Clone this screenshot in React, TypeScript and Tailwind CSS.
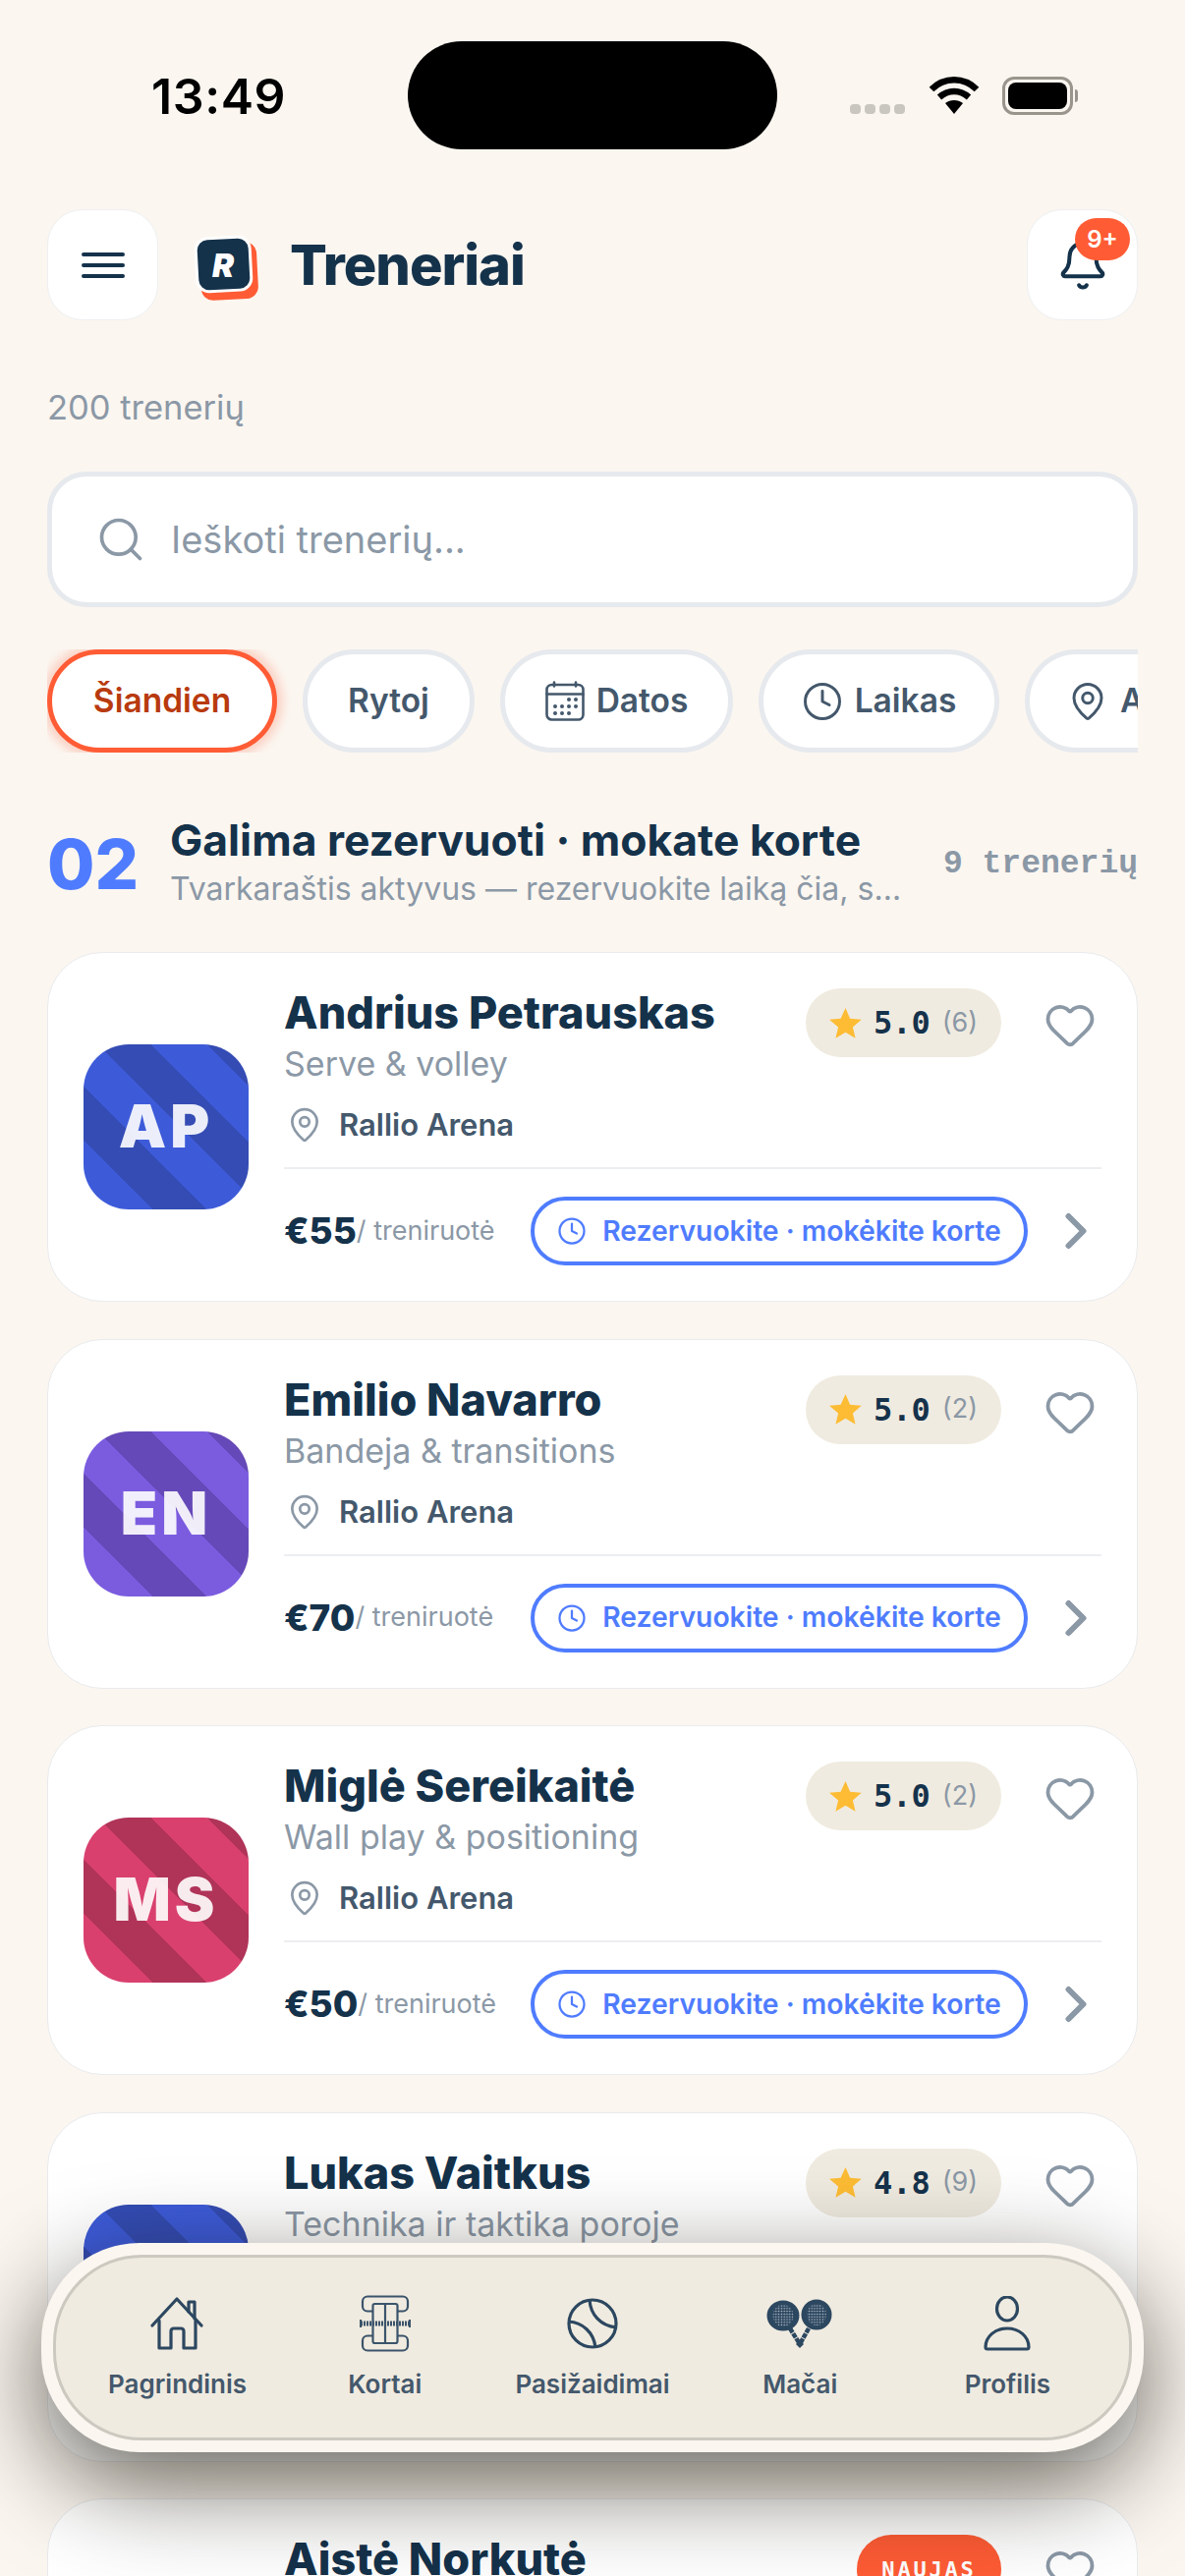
import { Bell, ChevronRight, Clock, Heart, MapPin, Search } from "lucide-react";

const body = "font-['Inter','Noto_Sans',sans-serif]";

const coaches = [
  {
    name: "Andrius Petrauskas",
    focus: "Serve & volley",
    price: "55",
    rating: "5.0",
    reviews: "(6)",
    initials: "AP",
    avatar: "bg-[repeating-linear-gradient(45deg,#344cb4_0,#344cb4_9.9px,#3d5bd9_9.9px,#3d5bd9_50.2px,#344cb4_50.2px,#344cb4_78.5px)]",
  },
  {
    name: "Emilio Navarro",
    focus: "Bandeja & transitions",
    price: "70",
    rating: "5.0",
    reviews: "(2)",
    initials: "EN",
    avatar: "bg-[repeating-linear-gradient(45deg,#6649b8_0,#6649b8_9.9px,#7b5cdf_9.9px,#7b5cdf_50.2px,#6649b8_50.2px,#6649b8_78.5px)]",
  },
  {
    name: "Miglė Sereikaitė",
    focus: "Wall play & positioning",
    price: "50",
    rating: "5.0",
    reviews: "(2)",
    initials: "MS",
    avatar: "bg-[repeating-linear-gradient(45deg,#b03358_0,#b03358_9.9px,#d9406e_9.9px,#d9406e_50.2px,#b03358_50.2px,#b03358_78.5px)]",
  },
  {
    name: "Lukas Vaitkus",
    focus: "Technika ir taktika poroje",
    price: "60",
    rating: "4.8",
    reviews: "(9)",
    initials: "LV",
    avatar: "bg-[repeating-linear-gradient(45deg,#344cb4_0,#344cb4_9.9px,#3d5bd9_9.9px,#3d5bd9_50.2px,#344cb4_50.2px,#344cb4_78.5px)]",
  },
  {
    name: "Aistė Norkutė",
    focus: "Pradedantiesiems",
    price: "45",
    rating: "",
    reviews: "",
    initials: "AN",
    avatar: "bg-[repeating-linear-gradient(45deg,#6649b8_0,#6649b8_9.9px,#7b5cdf_9.9px,#7b5cdf_50.2px,#6649b8_50.2px,#6649b8_78.5px)]",
  },
];

const Logo = () => (
  <svg width="68" height="68" viewBox="0 0 68 68" className="shrink-0">
    <rect x="7" y="8" width="58" height="58" rx="12" fill="#ff5c35" transform="rotate(-3 36 37)" />
    <rect x="3" y="3" width="55" height="54" rx="12" fill="#15324b" stroke="#fff" strokeWidth="3" transform="rotate(-3 30 30)" />
    <text x="30" y="43" textAnchor="middle" fontSize="33" fontWeight="900" fontStyle="italic" fill="#fff" fontFamily="Inter">R</text>
  </svg>
);

const MenuIcon = () => (
  <svg width="44" height="26" viewBox="0 0 44 26" stroke="#15324b" strokeWidth="4" strokeLinecap="round">
    <path d="M2 2h40M2 13h40M2 24h40" />
  </svg>
);

const CalendarIcon = () => (
  <svg width="40" height="41" viewBox="0 0 40 41" fill="none" stroke="#44586c" strokeWidth="2.6" strokeLinecap="round">
    <rect x="1.5" y="4" width="37" height="35.5" rx="5" />
    <path d="M1.5 13.5h37M9 1.5v4M31 1.5v4" />
    <g fill="#44586c" stroke="none">
      <circle cx="24" cy="19" r="2" />
      <circle cx="31" cy="19" r="2" />
      <circle cx="10" cy="26" r="2" />
      <circle cx="17" cy="26" r="2" />
      <circle cx="24" cy="26" r="2" />
      <circle cx="31" cy="26" r="2" />
      <circle cx="10" cy="33" r="2" />
      <circle cx="17" cy="33" r="2" />
      <circle cx="24" cy="33" r="2" />
    </g>
  </svg>
);

const StarIcon = () => (
  <svg width="33" height="31" viewBox="0 0 33 31" className="shrink-0">
    <path d="M16.5 0l4.6 10.8 11.6 1-8.8 7.6 2.7 11.4-10.1-6.1-10.1 6.1 2.7-11.4L0 11.8l11.6-1z" fill="#fdbc34" />
  </svg>
);

const HomeIcon = () => (
  <svg width="56" height="56" viewBox="0 0 56 56" fill="none" stroke="#2c4760" strokeWidth="3.2" strokeLinecap="round" strokeLinejoin="round">
    <path d="M2 30 27 3l25 27" />
    <path d="M39 16V6h6v17" />
    <path d="M9 25v28h12V36q0-3 3-3h7q3 0 3 3v17h12V25" />
  </svg>
);

const CourtIcon = () => (
  <svg width="52" height="58" viewBox="0 0 52 58" fill="none" stroke="#3b546b" strokeWidth="2.2" strokeLinejoin="round">
    <rect x="3" y="1.5" width="46" height="15" rx="5" />
    <rect x="3" y="41.5" width="46" height="15" rx="5" />
    <rect x="13.5" y="9" width="25" height="40" rx="2" fill="#f0ebe0" />
    <path d="M26 9v40" />
    <path d="M1 29h50" strokeWidth="5" strokeDasharray="2 1" />
    <path d="M1 25v8M51 25v8" />
  </svg>
);

const BallIcon = () => (
  <svg width="52" height="52" viewBox="0 0 52 52" fill="none" stroke="#2c4760" strokeWidth="3.2">
    <circle cx="26" cy="26" r="24" />
    <path d="M23 2c1 15 11 26 27 28" />
    <path d="M2 24c14 1 25 11 27 26" />
  </svg>
);

const RacketsIcon = () => (
  <svg width="68" height="50" viewBox="0 0 68 50">
    <defs>
      <pattern id="strings" width="2.8" height="2.8" patternUnits="userSpaceOnUse">
        <circle cx="1.4" cy="1.4" r="0.75" fill="#c6cdd3" />
      </pattern>
    </defs>
    <g fill="#2c4760">
      <ellipse cx="17" cy="17" rx="16.5" ry="15.5" />
      <ellipse cx="51" cy="16" rx="15.5" ry="15.5" />
    </g>
    <path d="M24 30l10 16M43 30l-9 16" stroke="#2c4760" strokeWidth="4.5" strokeDasharray="5 1" fill="none" />
    <path d="M34 42l4 4-4 4-4-4z" fill="#2c4760" />
    <ellipse cx="17" cy="17" rx="10.5" ry="11" fill="url(#strings)" />
    <ellipse cx="51" cy="16" rx="10" ry="11" fill="url(#strings)" />
  </svg>
);

const ProfileIcon = () => (
  <svg width="48" height="56" viewBox="0 0 48 56" fill="none" stroke="#2c4760" strokeWidth="3.2" strokeLinejoin="round">
    <ellipse cx="24" cy="13" rx="10.5" ry="12" />
    <path d="M2 52c0-11 10-19 22-19s22 8 22 19q0 2-2 2H4q-2 0-2-2z" />
  </svg>
);

const navItems = [
  { label: "Pagrindinis", icon: <HomeIcon /> },
  { label: "Kortai", icon: <CourtIcon /> },
  { label: "Pasižaidimai", icon: <BallIcon /> },
  { label: "Mačai", icon: <RacketsIcon /> },
  { label: "Profilis", icon: <ProfileIcon /> },
];

const Chip = ({ children, className }: { children: React.ReactNode; className: string }) => (
  <div className={`flex h-[105px] shrink-0 items-center justify-center gap-[12px] rounded-full border-[5px] bg-white text-[33.5px] font-semibold ${className}`}>
    {children}
  </div>
);

export default function App() {
  return (
    <div className={`relative h-[2622px] w-[1206px] overflow-hidden bg-[#fbf6f0] ${body}`}>
      {/* status bar */}
      <div className="h-[213px]">
        <div className="relative h-[152px] w-full">
          <span className="absolute left-[154px] top-[68px] text-[50px] font-semibold leading-[60px] tracking-[0.6px] text-black">13:49</span>
          <div className="absolute left-[415px] top-[42px] h-[110px] w-[376px] rounded-full bg-black" />
          <div className="absolute left-[865px] top-[106px] flex gap-[4px]">
            <div className="h-[10px] w-[11px] rounded-[4px] bg-[#c9c6c0]" />
            <div className="h-[10px] w-[11px] rounded-[4px] bg-[#c9c6c0]" />
            <div className="h-[10px] w-[11px] rounded-[4px] bg-[#c9c6c0]" />
            <div className="h-[10px] w-[11px] rounded-[4px] bg-[#c9c6c0]" />
          </div>
          <svg className="absolute left-[945px] top-[78px]" width="52" height="38" viewBox="0 0 52 38" fill="none" stroke="#000" strokeWidth="6.5">
            <path d="M3 13C16 0 36 0 49 13" />
            <path d="M11 21c9-8 21-8 30 0" />
            <path d="M26 38l-9-11c5-4 13-4 18 0z" fill="#000" stroke="none" />
          </svg>
          <div className="absolute left-[1020px] top-[78px] flex items-center">
            <div className="h-[39px] w-[72px] rounded-[12px] border-[3px] border-[#9a958c] p-[3px]">
              <div className="h-full w-full rounded-[8px] bg-black" />
            </div>
            <div className="ml-[2px] h-[13px] w-[3px] rounded-r-full bg-[#9a958c]" />
          </div>
        </div>
      </div>

      {/* header */}
      <div className="flex items-center px-[48px]">
        <div className="flex h-[113px] w-[113px] items-center justify-center rounded-[36px] border border-[#eef0f2] bg-white">
          <MenuIcon />
        </div>
        <div className="ml-[36px] mt-[6px]"><Logo /></div>
        <h1 className="ml-[30px] text-[56px] font-extrabold leading-none tracking-[-1px] text-[#15324b]">Treneriai</h1>
        <div className="relative ml-auto flex h-[113px] w-[113px] items-center justify-center rounded-[36px] border border-[#eef0f2] bg-white">
          <Bell size={54} color="#15324b" strokeWidth={1.8} />
          <div className="absolute left-[48px] top-[8px] flex h-[43px] w-[56px] items-center justify-center rounded-full bg-[#ff5c35] text-[24px] font-semibold text-white">9+</div>
        </div>
      </div>

      <p className="mt-[67px] px-[48px] text-[34.5px] leading-[44px] text-[#8b98a6]">200 trenerių</p>

      {/* search */}
      <div className="mx-[48px] mt-[43px] flex h-[138px] items-center rounded-[40px] border-[5px] border-[#e6e9ed] bg-white pl-[44px]">
        <Search size={52} color="#8b98a6" strokeWidth={1.7} />
        <span className="ml-[25px] text-[38px] text-[#8b98a6]">Ieškoti trenerių...</span>
      </div>

      {/* filters */}
      <div className="mx-[48px] mt-[43px] flex gap-[26px] overflow-hidden">
        <Chip className="w-[234px] border-[#ff5c35] text-[#b83a0e] shadow-[0_0_8px_6px_rgba(255,92,53,0.22)]">Šiandien</Chip>
        <Chip className="w-[175px] border-[#e6e9ed] text-[#44586c]">Rytoj</Chip>
        <Chip className="w-[237px] border-[#e6e9ed] text-[#44586c]"><CalendarIcon />Datos</Chip>
        <Chip className="w-[245px] border-[#e6e9ed] text-[#44586c]"><Clock size={42} strokeWidth={1.7} />Laikas</Chip>
        <Chip className="w-[200px] justify-start border-[#e6e9ed] pl-[38px] text-[#44586c]"><MapPin size={42} strokeWidth={1.7} />Arena</Chip>
      </div>

      {/* section heading */}
      <div className="mx-[48px] mt-[54px] flex h-[120px] items-center">
        <span className="w-[125px] text-[70px] font-extrabold leading-none text-[#4f7cff]">02</span>
        <div className="w-[745px] min-w-0 pb-[4px]">
          <h2 className="whitespace-nowrap text-[44.4px] font-bold leading-[54px] text-[#15324b]">Galima rezervuoti · mokate korte</h2>
          <p className="truncate text-[32px] leading-[46px] text-[#8b98a6]">Tvarkaraštis aktyvus — rezervuokite laiką čia, susimokėkite</p>
        </div>
        <span className="ml-auto font-['Liberation_Mono'] text-[33px] font-bold text-[#8b98a6]">9 trenerių</span>
      </div>

      {/* cards */}
      <div className="mx-[48px] mt-[29px] flex flex-col gap-[37.5px]">
        {coaches.map((coach) => (
          <article key={coach.name} className="flex h-[356px] shrink-0 rounded-[56px] border border-[#e9ebee] bg-white pl-[36px] pr-[36px]">
            <div className="flex h-full items-center">
              <div className={`flex h-[168px] w-[168px] items-center justify-center rounded-[46px] text-[61px] font-black tracking-[4px] text-white/90 ${coach.avatar}`}>
                {coach.initials}
              </div>
            </div>
            <div className="ml-[36px] flex min-w-0 flex-1 flex-col">
              <div className="relative h-[220px] border-b-2 border-[#eceef1]">
                <h3 className="pt-[34px] text-[45px] font-extrabold leading-[54px] text-[#15324b]">{coach.name}</h3>
                <p className="mt-[3px] text-[34px] leading-[44px] text-[#8b98a6]">{coach.focus}</p>
                <div className="mt-[21px] flex items-center gap-[16px] pl-[2px]">
                  <MapPin size={38} color="#8b98a6" strokeWidth={1.7} />
                  <span className="text-[31px] font-semibold leading-[38px] text-[#44586c]">Rallio Arena</span>
                </div>
                <div className="absolute right-0 top-[36px] flex items-start gap-[43px]">
                  {coach.rating ? (
                    <div className="flex h-[70px] w-[199px] items-center justify-center gap-[12px] rounded-full bg-[#f0ebe0]">
                      <StarIcon />
                      <span className="font-['DejaVu_Sans_Mono'] text-[32px] font-bold text-[#15324b]">{coach.rating}</span>
                      <span className="text-[27px] text-[#8b98a6]">{coach.reviews}</span>
                    </div>
                  ) : (
                    <div className="flex h-[70px] w-[147px] items-center justify-center rounded-full bg-[#ff5c35] font-['DejaVu_Sans_Mono'] text-[22px] font-bold tracking-[2.8px] text-white">NAUJAS</div>
                  )}
                  <Heart size={54} color="#8b98a6" strokeWidth={1.7} className="mr-[5px] mt-[10px]" />
                </div>
              </div>
              <div className="flex flex-1 items-center pb-[8px]">
                <span className="text-[37px] font-extrabold text-[#15324b]">€{coach.price}</span>
                <span className="text-[27px] text-[#8b98a6]">/ treniruotė</span>
                <div className="ml-auto flex h-[70px] w-[506px] shrink-0 items-center justify-center gap-[16px] rounded-full border-4 border-[#4f7cff] text-[28.3px] font-semibold text-[#4f7cff]">
                  <Clock size={30} strokeWidth={1.8} />
                  Rezervuokite · mokėkite korte
                </div>
                <ChevronRight size={60} color="#8b98a6" strokeWidth={2.4} className="ml-[19px] mr-[-4px] shrink-0" />
              </div>
            </div>
          </article>
        ))}
      </div>

      {/* bottom nav */}
      <nav className="absolute left-[42px] top-[2283px] h-[213px] w-[1122px] rounded-[100px] bg-[#fbf6f0] p-[12px] shadow-[0_32px_100px_rgba(20,15,5,0.65)]">
        <div className="grid h-full grid-cols-5 rounded-[90px] border-[3px] border-[#ccc9c0] bg-[#f0ebe0] px-[18px] pt-[38px]">
          {navItems.map((item) => (
            <div key={item.label} className="flex flex-col items-center">
              <div className="flex h-[58px] items-center justify-center">{item.icon}</div>
              <span className="mt-[15px] text-[26px] font-semibold leading-[36px] text-[#44586c]">{item.label}</span>
            </div>
          ))}
        </div>
      </nav>
    </div>
  );
}
